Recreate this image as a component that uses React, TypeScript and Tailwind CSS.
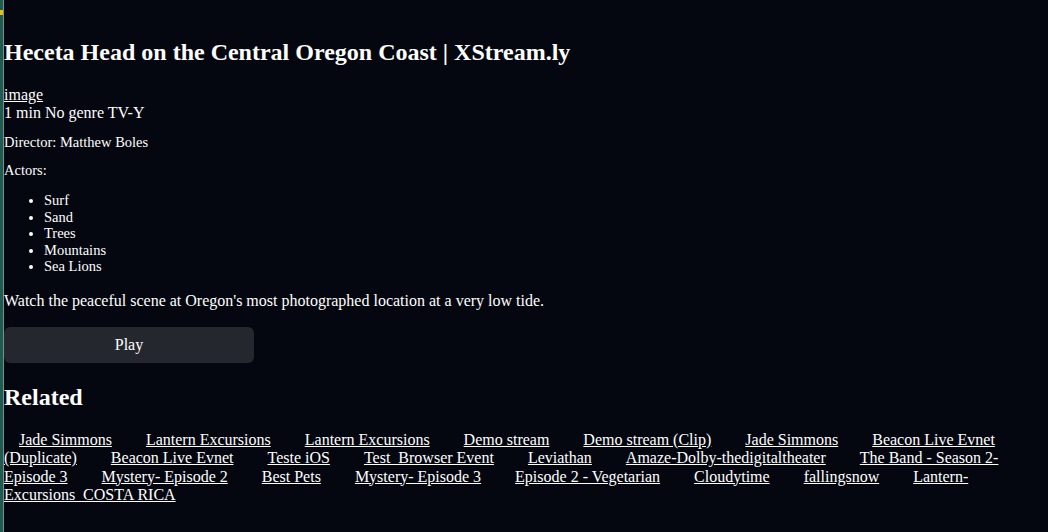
import React from "react";

const related = [
  "Jade Simmons",
  "Lantern Excursions",
  "Lantern Excursions",
  "Demo stream",
  "Demo stream (Clip)",
  "Jade Simmons",
  "Beacon Live Evnet (Duplicate)",
  "Beacon Live Evnet",
  "Teste iOS",
  "Test\u00a0\u00a0Browser Event",
  "Leviathan",
  "Amaze-Dolby-thedigitaltheater",
  "The Band - Season 2-Episode 3",
  "Mystery- Episode 2",
  "Best Pets",
  "Mystery- Episode 3",
  "Episode 2 - Vegetarian",
  "Cloudytime",
  "fallingsnow",
  "Lantern-Excursions\u00a0\u00a0COSTA RICA",
];

const actors = ["Surf", "Sand", "Trees", "Mountains", "Sea Lions"];

export default function App() {
  return (
    <div className="min-h-screen flex bg-[#04070f] text-white font-['Liberation_Serif',serif]">
      {/* left edge strip */}
      <div className="w-[3px] bg-[#1f5a4e] relative shrink-0">
        <div className="absolute top-[10px] left-0 w-[3px] h-[5px] bg-[#e5c00c]" />
      </div>
      <div className="w-px bg-[#7e8f8b] shrink-0" />

      <div className="flex-1 pb-6">
        <h1 className="mt-[38px] text-[24px] leading-[28px] font-bold">
          Heceta Head on the Central Oregon Coast | XStream.ly
        </h1>

        <a href="#" className="block mt-[20px] text-[16px] leading-[18px] underline">
          image
        </a>
        <div className="text-[16px] leading-[18px]">1 min No genre TV-Y</div>

        <p className="mt-[12px] text-[14.5px] leading-[17px]">Director: Matthew Boles</p>
        <p className="mt-[11px] text-[14.5px] leading-[17px]">Actors:</p>
        <ul className="mt-[13px] list-disc pl-[40px] text-[14.5px] leading-[16.5px]">
          {actors.map((a) => (
            <li key={a}>{a}</li>
          ))}
        </ul>

        <p className="mt-[17px] text-[16px] leading-[18px]">
          Watch the peaceful scene at Oregon's most photographed location at a very low tide.
        </p>

        <button className="mt-[17px] w-[250px] h-[36px] rounded-[6px] bg-[#25272e] text-[16px] text-white">
          Play
        </button>

        <h2 className="mt-[20px] text-[24px] leading-[28px] font-bold">Related</h2>

        <div className="mt-[20px] text-[16px] leading-[18.5px]">
          {related.map((r, i) => (
            <React.Fragment key={i}>
              <a href="#" className="mx-[15px] underline">
                {r}
              </a>{" "}
            </React.Fragment>
          ))}
        </div>
      </div>
    </div>
  );
}
